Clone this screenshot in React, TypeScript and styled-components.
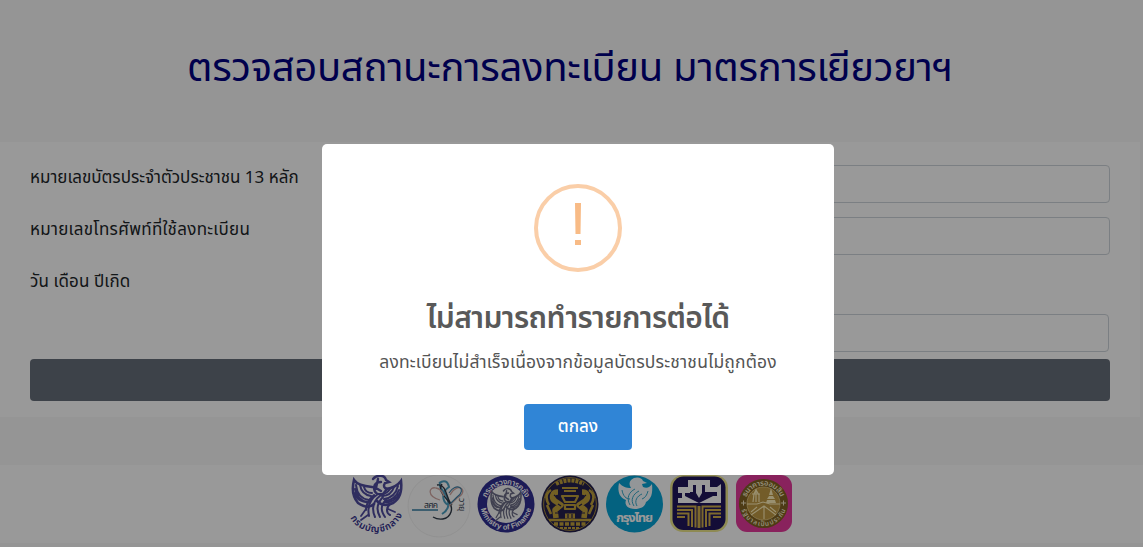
import React, { FC } from 'react'
import styled, { createGlobalStyle } from 'styled-components'

const font = '"Noto Sans Thai", "Noto Sans", sans-serif'

const GlobalStyle = createGlobalStyle`
    * {
        box-sizing: border-box;
    }
    body {
        margin: 0;
        overflow: hidden;
        background: #f8f8f8;
        font-family: ${font};
        font-size: 17px;
        line-height: 24px;
        color: #212529;
    }
`

const Page = styled.main`
    height: 547px;
    padding-right: 3px;
`

const Header = styled.header`
    height: 142px;
    padding-top: 39px;
    text-align: center;
`

const Title = styled.h1`
    margin: 0;
    font-size: 40px;
    font-weight: 400;
    line-height: 60px;
    letter-spacing: -0.3px;
    color: #000080;
`

const Form = styled.form`
    height: 275px;
    padding: 23px 30px 0;
    background: #fff;
`

const Row = styled.div`
    display: grid;
    grid-template-columns: 1fr 2fr;
    height: 52px;
`

const Label = styled.label<{ $spacing?: number }>`
    padding-top: 1px;
    white-space: nowrap;
    letter-spacing: ${props => props.$spacing || 0}px;
`

const Input = styled.input`
    width: 100%;
    height: 38px;
    border: 1px solid #ced4da;
    border-radius: 4px;
    background: #fff;
`

const YearRow = styled.div`
    height: 45px;
    margin-top: -7px;
    padding: 0 1px 0 360px;
`

const Submit = styled.button`
    display: block;
    width: 100%;
    height: 42px;
    border: none;
    border-radius: 4px;
    background: #676e7a;
`

const Footer = styled.footer`
    display: flex;
    justify-content: center;
    gap: 6.5px;
    height: 78px;
    margin: 48px -3px 0 0;
    padding: 10px 3px 0 0;
    background: #fff;

    svg {
        display: block;
        width: 58px;
        height: 60px;
        overflow: visible;
    }
`

const Overlay = styled.div`
    position: fixed;
    inset: 0;
    padding: 144px 0 0 322px;
    background: rgba(0, 0, 0, 0.4);
`

const Modal = styled.section`
    display: flex;
    flex-direction: column;
    align-items: center;
    width: 512px;
    height: 331px;
    padding-top: 40px;
    border-radius: 5px;
    background: #fff;
`

const WarningIcon = styled.svg`
    width: 88px;
    height: 88px;
`

const ModalTitle = styled.h2`
    margin: 25px 0 0;
    font-size: 30px;
    font-weight: 600;
    line-height: 44px;
    letter-spacing: -0.6px;
    color: #595959;
`

const ModalText = styled.p`
    margin: 10px 0 0;
    font-size: 17.5px;
    line-height: 24px;
    letter-spacing: 0.15px;
    color: #545454;
`

const Confirm = styled.button`
    width: 108px;
    height: 46px;
    margin-top: 29px;
    padding: 0;
    border: none;
    border-radius: 4px;
    background: #3085d6;
    color: #fff;
    font: 500 17px ${font};
`

const Garuda: FC<{ color: string }> = ({ color }) => (
    <g fill='none' stroke={color} strokeLinecap='round'>
        <path d='M25 4c4-5 12-4 13 1l3 2-4 1c-2 3-1 5 2 6l-4 5c-6 1-9-1-9-7 1-4 4-5 7-5M30 4l-2 9 5 3' strokeWidth='2.4' />
        <path d='M24 12C14 11 8 8 6 5c-2 8-2 16 4 23 6 4 12 5 16 1' strokeWidth='2.6' />
        <path d='M8 10c1 9 6 14 13 15M12 10c1 6 5 10 11 11M6 18c3 7 9 10 15 9M16 12c1 4 4 6 8 6M7 14c1 7 6 12 12 13' strokeWidth='2' />
        <path d='M38 14c8-1 12-4 15-8 1 9-1 18-8 22-6 3-12 2-16-2' strokeWidth='2.6' />
        <path d='M50 11c-2 8-7 12-14 13M46 12c-2 6-6 9-12 9M52 18c-3 6-9 10-15 9M42 14c-2 3-4 5-8 5M51 15c-2 6-8 11-14 11' strokeWidth='2' />
        <path d='M30 19c-8 5-11 12-9 22M33 20c-8 6-10 13-6 22M35 22c-6 6-7 13-3 20M38 25c-6 6-5 11-1 17M42 29c-4 4-4 9 0 11M26 20c-6 5-8 10-8 15' strokeWidth='2' />
        <path d='M18 34l-5 7M20 40l-7 5M40 34l7 3' strokeWidth='1.8' />
    </g>
)

const ComptrollerLogo: FC = () => (
    <svg viewBox='0 0 58 60'>
        <path id='comptroller' d='M0 38Q7 57 30 57 48 56 57 35' fill='none' />
        <Garuda color='#4f4c9f' />
        <text fontSize='9.5' fontWeight='600' fill='#2f2c8a' textAnchor='middle'>
            <textPath href='#comptroller' startOffset='50%' textLength='64'>กรมบัญชีกลาง</textPath>
        </text>
    </svg>
)

const FiscalLogo: FC = () => (
    <svg viewBox='0 0 58 60'>
        <circle cx='27' cy='31' r='31' fill='#fdfdfd' stroke='#ededed' strokeWidth='0.7' />
        <path d='M27 8q8-5 10 4c-8 5-7 14-1 18M28 8c-2 6 5 8 7 14s3 12-5 17' fill='none' stroke='#4b9fc0' strokeWidth='2' />
        <path d='M30 9c-7 10 13 17 9 28-3 9-13 8-18 5M25 10c10-2 9 15 15 20' fill='none' stroke='#303b48' strokeWidth='1.4' />
        <path d='M28 25C14 21 17 11 24 13c6 1 7 6 8 8M38 20c8-15 20-3 7 3l-8 8' fill='none' stroke='#d1a7a2' strokeWidth='1.3' />
        <path d='M37 18c7-12 19-4 8 4l-7 7' fill='none' stroke='#3f7fa6' strokeWidth='1.1' />
        <path d='M0 35h26' stroke='#347ca2' strokeWidth='1.5' />
        <text x='12' y='33' fontSize='8.5' fill='#334052' textLength='14'>สศค</text>
        <text transform='translate(47 23) rotate(90)' fontSize='9' fill='#334052'>วายุ</text>
    </svg>
)

const MinistryLogo: FC = () => (
    <svg viewBox='0 0 58 60'>
        <path id='ministryTop' d='M8.5 30a20.5 20.5 0 0 1 41 0' fill='none' />
        <path id='ministryBottom' d='M3.5 29a25.5 25.5 0 0 0 51 0' fill='none' />
        <circle cx='29' cy='29' r='28.5' fill='#302d91' />
        <circle cx='29' cy='29' r='19' fill='#f5f5f5' />
        <g transform='translate(11 13) scale(.62 .72)'><Garuda color='#6b6c86' /></g>
        <text fontSize='8' fontWeight='600' fill='#fff' textAnchor='middle'>
            <textPath href='#ministryTop' startOffset='50%' textLength='50'>กระทรวงการคลัง</textPath>
        </text>
        <text fontSize='7.5' fontFamily='Liberation Sans' fontWeight='700' fill='#fff' textAnchor='middle'>
            <textPath href='#ministryBottom' startOffset='50%' textLength='70'>Ministry of Finance</textPath>
        </text>
    </svg>
)

const GovernmentLogo: FC = () => (
    <svg viewBox='0 0 58 60'>
        <circle cx='29' cy='29' r='28.5' fill='#25214e' />
        <circle cx='29' cy='29' r='26.4' fill='none' stroke='#b39539' strokeWidth='0.9' />
        <g fill='none' stroke='#c0a03b' strokeLinejoin='round'>
            <path d='M15 9q14-7 28 0' strokeWidth='4' strokeDasharray='3 1' />
            <path d='M21 13h16M23 16h12' strokeWidth='2' />
            <path d='M21 21h16l-3 6H24zM24 30h10v4H24z' strokeWidth='2.2' />
            <path d='M24 41h10' strokeWidth='5' />
            <path d='M17 17c-6 0-7 6-3 9l6 4-6 5 1 8M41 17c6 0 7 6 3 9l-6 4 6 5-1 8' strokeWidth='5.6' />
            <path d='M8 30c-4-7-3-12 2-15M50 30c4-7 3-12-2-15M6 30l4 9M52 30l-4 9' strokeWidth='2.6' />
            <path d='M8 45h42' strokeWidth='2.4' />
            <path d='M13 49h32' strokeWidth='3.4' strokeDasharray='4 1.5' />
            <path d='M19 53h20' strokeWidth='2' strokeDasharray='3 1' />
        </g>
        <path d='M27 39v4M31 39v4M13 20l4 3M45 20l-4 3M17 29l3 2M41 29l-3 2M14 38h4M44 38h-4' stroke='#25214e' strokeWidth='1.2' />
    </svg>
)

const KrungthaiLogo: FC = () => (
    <svg viewBox='0 0 58 60'>
        <circle cx='28.5' cy='29' r='28.5' fill='#07a3d6' />
        <path d='M25 5c4-4 11-3 12 1l4 2-5 1 1 3c4 2 7 0 9-3 1 10-1 15-6 18-1 5-6 7-11 7-7 0-11-4-9-9-6-2-9-8-7-17 4 4 7 5 12 5-2-3-2-6 0-8' fill='#f6fbfd' />
        <path d='M29 14c-6 3-9 9-5 16M33 16c-6 3-9 9-5 15M36 19c-5 2-8 7-5 12M16 15c1 6 4 9 8 9M42 16c-1 4-3 7-6 8' fill='none' stroke='#35a9cb' strokeWidth='1' />
        <text x='28.5' y='47' textAnchor='middle' fontSize='13' fontWeight='700' fill='#fff' textLength='37'>กรุงไทย</text>
    </svg>
)

const BaacLogo: FC = () => (
    <svg viewBox='0 0 58 60'>
        <rect x='0' y='0' width='58' height='57' rx='13' fill='#ede68b' />
        <rect x='2.5' y='1.5' width='53' height='53.5' rx='11' fill='#21175d' />
        <path d='M18 5h22v12h-5V10h-3v8l-3 5-3-5v-8h-3v7h-5z' fill='#fff' />
        <path d='M8 12h12v6h-5v3l14 7H8v-5h4v-5H8zM38 12h9l4-3v19H29l14-7h4v-4h-9z' fill='#fff' />
        <path d='M7 31.5h18.5v21M7 35h15v17M7 38.5h11.5V51M7 42h8M51 31.5H32.5v21M51 35H36v17M51 38.5H39.5V51M51 42h-8' fill='none' stroke='#d0b04b' strokeWidth='2' />
        <path d='M29 31v22' stroke='#d0b04b' strokeWidth='3' />
    </svg>
)

const SavingsLogo: FC = () => (
    <svg viewBox='0 0 58 60'>
        <path id='savingsTop' d='M10 29a18.5 18.5 0 0 1 37 0' fill='none' />
        <path id='savingsBottom' d='M5.5 28a23 23 0 0 0 46 0' fill='none' />
        <rect x='1' y='0' width='56' height='57' rx='11' fill='#e5399b' />
        <circle cx='28.5' cy='28.5' r='24.5' fill='#806323' />
        <circle cx='28.5' cy='28.5' r='16.5' fill='#c09a45' stroke='#e3c985' strokeWidth='0.8' />
        <path d='M12 29h10l6-2 7 2h10M16 40l13-9 12 9M29 31v13M22 32l-6 5M35 32l6 5' fill='none' stroke='#fff0bb' strokeWidth='1.1' />
        <path d='M21 14v13M18 27l1-8 2-4 3 5v7M17 19h8' fill='none' stroke='#fff0bb' strokeWidth='1.2' />
        <path d='M36 13l2 7h-4zM34 21h4l2 3h-8zM32 25h8l1 3H31z' fill='#fff0bb' />
        <path d='M6 28h5M8.5 25.5v5M46 28h5M48.5 25.5v5' stroke='#eee3c2' strokeWidth='1' />
        <text fontSize='7.5' fontWeight='600' fill='#f6ecca' textAnchor='middle'>
            <textPath href='#savingsTop' startOffset='50%' textLength='44'>ธนาคารออมสิน</textPath>
        </text>
        <text fontSize='6.5' fontWeight='600' fill='#f6ecca' textAnchor='middle'>
            <textPath href='#savingsBottom' startOffset='50%' textLength='58'>รัฐบาลเป็นประกัน</textPath>
        </text>
    </svg>
)

const App: FC = () => (
    <>
        <GlobalStyle />
        <Page>
            <Header>
                <Title>ตรวจสอบสถานะการลงทะเบียน มาตรการเยียวยาฯ</Title>
            </Header>
            <Form>
                <Row>
                    <Label>หมายเลขบัตรประจำตัวประชาชน 13 หลัก</Label>
                    <Input />
                </Row>
                <Row>
                    <Label $spacing={0.3}>หมายเลขโทรศัพท์ที่ใช้ลงทะเบียน</Label>
                    <Input />
                </Row>
                <Row>
                    <Label $spacing={0.1}>วัน เดือน ปีเกิด</Label>
                </Row>
                <YearRow>
                    <Input />
                </YearRow>
                <Submit type='button' />
            </Form>
            <Footer>
                <ComptrollerLogo />
                <FiscalLogo />
                <MinistryLogo />
                <GovernmentLogo />
                <KrungthaiLogo />
                <BaacLogo />
                <SavingsLogo />
            </Footer>
        </Page>
        <Overlay>
            <Modal role='dialog'>
                <WarningIcon viewBox='0 0 88 88'>
                    <circle cx='44' cy='44' r='42' fill='none' stroke='#facea8' strokeWidth='4' />
                    <path d='M41 19h6l-.5 31h-5zM41 56h6v5h-6z' fill='#f8bb86' />
                </WarningIcon>
                <ModalTitle>ไม่สามารถทำรายการต่อได้</ModalTitle>
                <ModalText>ลงทะเบียนไม่สำเร็จเนื่องจากข้อมูลบัตรประชาชนไม่ถูกต้อง</ModalText>
                <Confirm>ตกลง</Confirm>
            </Modal>
        </Overlay>
    </>
)

export default App
